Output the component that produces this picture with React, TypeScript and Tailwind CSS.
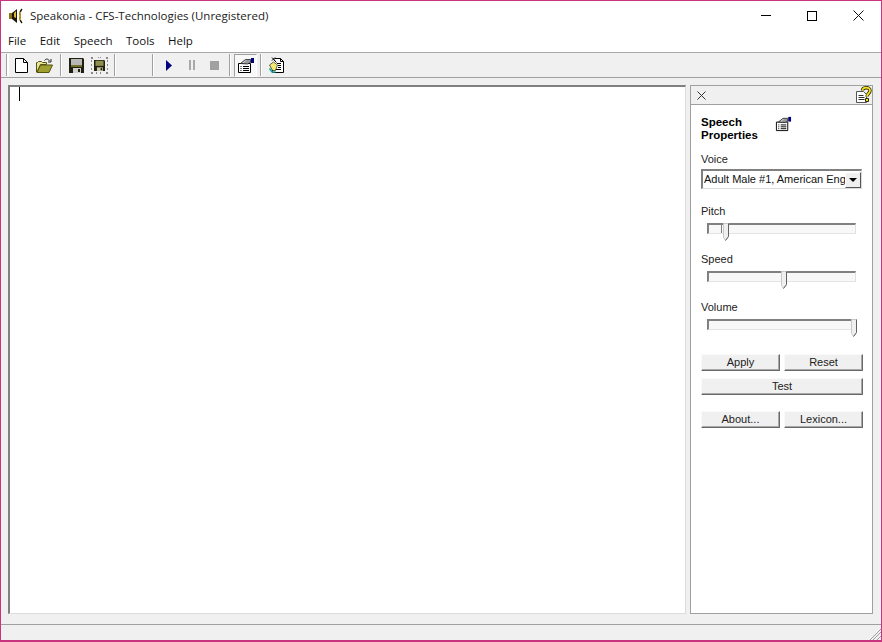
import type { FC, ReactNode } from 'react'

const ui = { fontFamily: '"Open Sans", "Noto Sans", sans-serif' }

const Sep: FC = () => <div className="h-[22px] w-[2px] border-l border-[#a0a0a0] bg-white" />

const ToolBtn: FC<{ children: ReactNode }> = ({ children }) => (
  <div className="flex h-[24px] w-[23px] items-center justify-center">{children}</div>
)

const NewIcon = () => (
  <svg width="13" height="15" viewBox="0 0 13 15">
    <path d="M0.5 0.5h8l4 4v10h-12z" fill="#fff" stroke="#000" />
    <path d="M8.5 0.5v4h4" fill="none" stroke="#000" />
  </svg>
)
const OpenIcon = () => (
  <svg width="17" height="15" viewBox="0 0 17 15">
    <path d="M0.5 14V4.5h1l1-1h3l1 1h4v2H4.5L1 14z" fill="#e6e69a" stroke="#555510" />
    <path d="M1 14.5l3.5-7.5h12l-3.5 7.5z" fill="#a0a030" stroke="#555510" />
    <path d="M8.5 2.5c1.5-2 3.5-2 5 0.5" fill="none" stroke="#222" />
    <path d="M15 1v3h-3" fill="none" stroke="#222" />
  </svg>
)
const SaveIcon = () => (
  <svg width="15" height="15" viewBox="0 0 15 15">
    <path d="M0 0h14l1 1v14H0z" fill="#20200c" />
    <path d="M2 1h11v6H2z" fill="#b8b8b8" />
    <path d="M2 7h11v2H2z" fill="#70702c" />
    <path d="M4 10h8v5H4z" fill="#d0d0d0" />
    <path d="M9 11h2v3H9z" fill="#20200c" />
  </svg>
)
const SaveAllIcon = () => (
  <svg width="17" height="17" viewBox="0 0 17 17">
    <svg x="3" y="3" width="11" height="11" viewBox="0 0 15 15">
      <path d="M0 0h14l1 1v14H0z" fill="#20200c" />
      <path d="M2 1h11v7H2z" fill="#8f8f50" />
      <path d="M4 10h8v5H4z" fill="#c8c8a8" />
      <path d="M9 11h2v3H9z" fill="#20200c" />
    </svg>
    <path d="M0 1h2M7 0h1M9 0h1M15 1h2M0 4h1M16 4h1M0 8h1M16 8h1M0 12h1M16 12h1M0 16h2M5 16h1M9 16h1M15 16h2" stroke="#222" fill="none" />
  </svg>
)
const PropsIcon = ({ size = 18 }: { size?: number }) => (
  <svg width={size} height={size} viewBox="0 0 18 18">
    <path d="M1.5 7.5h12v9h-12z" fill="#fff" stroke="#000" />
    <path d="M3.5 10.5h1M6 10.5h6M3.5 12.5h1M6 12.5h6M3.5 14.5h1M6 14.5h6" stroke="#000" fill="none" />
    <path d="M3.5 7.5L8.5 3.5h5v3l-3 1.5z" fill="#9a9a9a" stroke="#222" strokeWidth="0.8" />
    <path d="M5.5 7l3-2.5h1L6.5 7z" fill="#e8e8e8" />
    <path d="M14 2h3v5h-3z" fill="#000080" />
  </svg>
)
const LexiconIcon = () => (
  <svg width="18" height="18" viewBox="0 0 18 18">
    <path d="M6.5 2.5h6l3 3v11h-11v-7" fill="#fff" stroke="#000" />
    <path d="M12.5 2.5v3h3" fill="none" stroke="#000" />
    <path d="M9 7.5h4M10 9.5h3M10 11.5h3M7 13.5h6" stroke="#000" />
    <path d="M4 1.5l3 3M7 1.5l-3 3M5.5 3.5l3 3" stroke="#000" fill="none" />
    <path d="M1.5 9l4-3 4 3-2 5.5h-3z" fill="#f0ea70" stroke="#222" strokeWidth="0.7" />
    <path d="M1.5 12.5l2.5 3.5h3.5" fill="none" stroke="#19a0a0" strokeWidth="1.5" />
  </svg>
)
const HelpIcon = () => (
  <svg width="16" height="18" viewBox="0 0 16 18">
    <path d="M0.5 5.5h7l3 3v8h-10z" fill="#fff" stroke="#555" />
    <path d="M2.5 9.5h5M2.5 11.5h6M2.5 13.5h6" stroke="#333" />
    <path d="M6.5 4.5C6.5 1 14 0.5 14 4.5c0 3-3 3-3 6" fill="none" stroke="#2a2a00" strokeWidth="3.4" />
    <path d="M6.5 4.5C6.5 1 14 0.5 14 4.5c0 3-3 3-3 6" fill="none" stroke="#f4e020" strokeWidth="1.8" />
    <path d="M9.5 12.5h3v3h-3z" fill="#f4e020" stroke="#2a2a00" />
  </svg>
)
const AppIcon = () => (
  <svg width="16" height="16" viewBox="0 0 16 16">
    <path d="M0 5h3v6H0z" fill="#8a7420" />
    <path d="M3 5l5-4v14l-5-4z" fill="#1c1608" />
    <path d="M5 5l2-2v7l-2-1z" fill="#e0b830" />
    <path d="M13 1c-3 3-3 11 0 14" fill="none" stroke="#1c1608" strokeWidth="1.4" />
    <path d="M11.5 4c-1 2-1 6 0 8" fill="none" stroke="#e0a820" strokeWidth="1.4" />
  </svg>
)

const Menu: FC = () => (
  <div className="flex h-[22px] items-center gap-[13.5px] bg-white pl-[7px] text-[11.5px] text-[#111]" style={ui}>
    {['File', 'Edit', 'Speech', 'Tools', 'Help'].map(m => <span key={m}>{m}</span>)}
  </div>
)

const Toolbar: FC = () => (
  <div className="h-[26px] border-y border-t-[#a8a8a8] border-b-[#a0a0a0] bg-[#f0f0f0]">
    <div className="flex h-full items-center pl-[5px]">
      <div className="mr-[1px] h-[22px] w-[3px] border-l border-[#a0a0a0] bg-white" />
      <ToolBtn><NewIcon /></ToolBtn>
      <ToolBtn><OpenIcon /></ToolBtn>
      <div className="w-[4px]" />
      <Sep />
      <div className="w-[3px]" />
      <ToolBtn><SaveIcon /></ToolBtn>
      <ToolBtn><SaveAllIcon /></ToolBtn>
      <div className="w-[3px]" />
      <Sep />
      <div className="w-[36px]" />
      <Sep />
      <div className="w-[3px]" />
      <ToolBtn>
        <svg width="8" height="11" viewBox="0 0 8 11"><path d="M1 0l6 5.5L1 11z" fill="#000080" /></svg>
      </ToolBtn>
      <ToolBtn>
        <svg width="8" height="10" viewBox="0 0 8 10"><path d="M1 0h2v10H1zM5 0h2v10H5z" fill="#a8a8a8" /></svg>
      </ToolBtn>
      <ToolBtn>
        <div className="h-[9px] w-[9px] bg-[#a0a0a0]" />
      </ToolBtn>
      <div className="w-[3px]" />
      <Sep />
      <div className="ml-[3px] flex h-[23px] w-[23px] items-center justify-center border border-t-[#a0a0a0] border-l-[#a0a0a0] border-r-white border-b-white bg-[#f8f8f8]">
        <PropsIcon />
      </div>
      <div className="w-[3px]" />
      <Sep />
      <div className="w-[3px]" />
      <ToolBtn><LexiconIcon /></ToolBtn>
    </div>
  </div>
)

const Slider: FC<{ label: string; pos: number; mark?: boolean }> = ({ label, pos, mark }) => (
  <div className="mt-[11px]">
    <div className="h-[14px] leading-[14px] text-[#222]">{label}</div>
    <div className="relative mt-[5px] ml-[6px] h-[18px] w-[149px]">
      <div className="mt-[2px] h-[11px] border border-t-2 border-l-2 border-t-[#808080] border-l-[#808080] border-r-[#e0e0e0] border-b-[#e4e4e4] bg-[#f8f8f8]">
        {mark && <div className="h-full w-[13px] border-r border-[#808080]" />}
      </div>
      <svg className="absolute top-0" style={{ left: pos }} width="6" height="18" viewBox="0 0 6 18">
        <path d="M0.5 0.5h5v13l-3 4-2-3z" fill="#efefef" stroke="#c8c8c8" />
        <path d="M5.5 0.5v13l-3 4" fill="none" stroke="#606060" />
      </svg>
    </div>
  </div>
)

const Btn: FC<{ label: string; className?: string }> = ({ label, className = 'w-[79px]' }) => (
  <div className={`flex h-[17px] items-center justify-center border border-t-[#fafafa] border-l-[#fafafa] border-r-[#696969] border-b-[#696969] bg-[#f0f0f0] text-[#222] shadow-[inset_-1px_-1px_0_#a8a8a8] ${className}`}>
    {label}
  </div>
)

const SidePanel: FC = () => (
  <div className="flex h-full w-[183px] shrink-0 flex-col border border-[#a0a0a0] bg-white text-[11px]" style={{ fontFamily: '"Liberation Sans", Arial, sans-serif' }}>
    <div className="flex h-[19px] shrink-0 items-center justify-between border-b border-[#a0a0a0] bg-[#f0f0f0] pl-[6px]">
      <svg width="9" height="9" viewBox="0 0 9 9"><path d="M0.5 0.5l8 8M8.5 0.5l-8 8" stroke="#333" /></svg>
      <HelpIcon />
    </div>
    <div className="flex-1 pt-[11px] pl-[10px]">
      <div className="flex h-[26px]">
        <div className="w-[74px] text-[11.5px] leading-[13px] font-bold text-black">Speech Properties</div>
        <div className="-mt-[1px]"><PropsIcon size={17} /></div>
      </div>
      <div className="mt-[10px] h-[14px] leading-[14px] text-[#222]">Voice</div>
      <div className="mt-[3px] flex h-[20px] w-[161px] items-center border border-t-2 border-l-2 border-t-[#808080] border-l-[#808080] border-r-[#dcdcdc] border-b-[#dcdcdc] bg-white pl-[1px] text-[#111]">
        <span className="w-[141px] whitespace-nowrap">Adult Male #1, American Eng</span>
        <div className="flex h-[16px] w-[16px] items-center justify-center border border-t-white border-l-white border-r-[#555] border-b-[#555] bg-[#f0f0f0]">
          <div className="h-0 w-0 border-x-[4px] border-t-[4px] border-x-transparent border-t-black" />
        </div>
      </div>
      <div className="mt-[15px]" />
      <Slider label="Pitch" pos={16} mark />
      <Slider label="Speed" pos={74} />
      <Slider label="Volume" pos={144} />
      <div className="mt-[17px] flex flex-col">
        <div className="flex gap-[4px]"><Btn label="Apply" /><Btn label="Reset" /></div>
        <div className="mt-[7px]"><Btn label="Test" className="w-[162px]" /></div>
        <div className="mt-[16px] flex gap-[4px]"><Btn label="About..." /><Btn label="Lexicon..." /></div>
      </div>
    </div>
  </div>
)

export default function App() {
  return (
    <div className="flex h-[642px] w-[882px] flex-col overflow-hidden border border-b-2 border-[#c8347e] bg-white">
      {/* Title bar */}
      <div className="flex h-[29px] shrink-0 items-center bg-white">
        <div className="ml-[8px]"><AppIcon /></div>
        <span className="ml-[5px] text-[11.5px] whitespace-nowrap text-[#222]" style={ui}>Speakonia - CFS-Technologies (Unregistered)</span>
        <div className="flex-1" />
        <div className="flex w-[138px] items-center">
          <div className="flex w-[46px] justify-center"><div className="h-[1px] w-[10px] bg-black" /></div>
          <div className="flex w-[46px] justify-center"><div className="h-[10px] w-[10px] border border-black" /></div>
          <div className="flex w-[46px] justify-center">
            <svg width="11" height="11" viewBox="0 0 11 11"><path d="M0.5 0.5l10 10M10.5 0.5l-10 10" stroke="#111" /></svg>
          </div>
        </div>
      </div>
      <Menu />
      <Toolbar />
      {/* Main area */}
      <div className="flex min-h-0 flex-1 gap-[4px] bg-[#f0f0f0] pt-[7px] pr-[8px] pb-[10px] pl-[7px]">
        <div className="flex-1 border border-t-[2px] border-l-[2px] border-t-[#808080] border-l-[#808080] border-r-[#dcdcdc] border-b-[#dcdcdc] bg-white pl-[9px]">
          <div className="h-[14px] w-[1px] bg-black" />
        </div>
        <SidePanel />
      </div>
      {/* Status bar */}
      <div className="relative h-[16px] shrink-0 border-t border-[#a0a0a0] bg-[#f0f0f0]">
        <svg className="absolute right-0 bottom-0" width="12" height="12" viewBox="0 0 12 12">
          <path d="M1 12L12 1M4 12l8-8M8 12l4-4" stroke="#a0a0a0" fill="none" />
        </svg>
      </div>
    </div>
  )
}
